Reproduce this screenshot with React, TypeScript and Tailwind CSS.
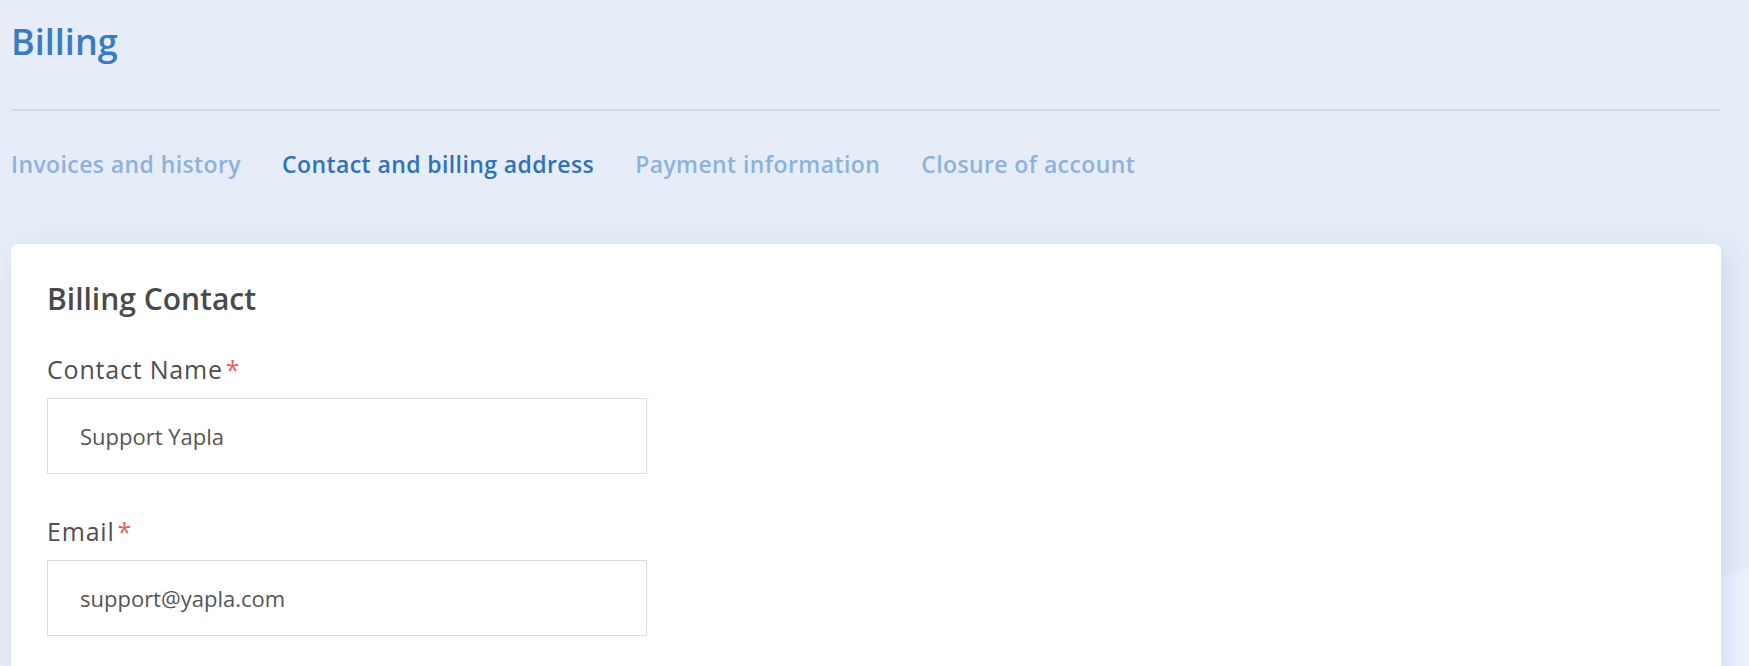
const tabs = [
  { label: 'Invoices and history', active: false },
  { label: 'Contact and billing address', active: true },
  { label: 'Payment information', active: false },
  { label: 'Closure of account', active: false },
];

function Field({ label, value }: { label: string; value: string }) {
  return (
    <div className="flex flex-col">
      <label className="flex items-center text-[25px] leading-[32px] tracking-[0.8px] text-[#4f4f4f]">
        {label}
        <span className="ml-[3px] text-[#f05a5a]">*</span>
      </label>
      <input
        readOnly
        value={value}
        className="mt-[13px] h-[76px] w-[600px] border border-[#d5dde8] bg-white pl-[32px] text-[22px] text-[#555555] outline-none"
      />
    </div>
  );
}

export default function App() {
  return (
    <div className="relative h-[666px] w-full overflow-hidden bg-[#e6edf8] font-['Open_Sans',sans-serif]">
      {/* background wave */}
      <svg className="absolute inset-0 h-full w-full" viewBox="0 0 1749 666" preserveAspectRatio="none">
        <polygon points="1000,834 1749,567 1749,666 1000,666" fill="#eef3fc" />
      </svg>

      <div className="relative pl-[11px] pr-[28px]">
        <h1 className="pt-[20px] text-[36px] font-semibold leading-[44px] text-[#3b7bbf]">Billing</h1>
        <div className="mt-[45px] h-[2px] bg-[#d3dbe8]" />

        <nav className="mt-[38px] flex gap-[41px]">
          {tabs.map((t) => (
            <span
              key={t.label}
              className={`text-[23px] font-semibold leading-[30px] tracking-[0.4px] ${t.active ? 'text-[#2f72b6]' : 'text-[#8db2db]'}`}
            >
              {t.label}
            </span>
          ))}
        </nav>

        <div className="mt-[65px] h-[440px] rounded-[6px] bg-white px-[36px] pt-[37px] shadow-[8px_6px_24px_rgba(160,185,225,0.35)]">
          <h2 className="text-[30px] font-semibold leading-[36px] text-[#4a4a4a]">Billing Contact</h2>
          <div className="mt-[36px] flex flex-col gap-[41px]">
            <Field label="Contact Name" value="Support Yapla" />
            <Field label="Email" value="support@yapla.com" />
          </div>
        </div>
      </div>
    </div>
  );
}
